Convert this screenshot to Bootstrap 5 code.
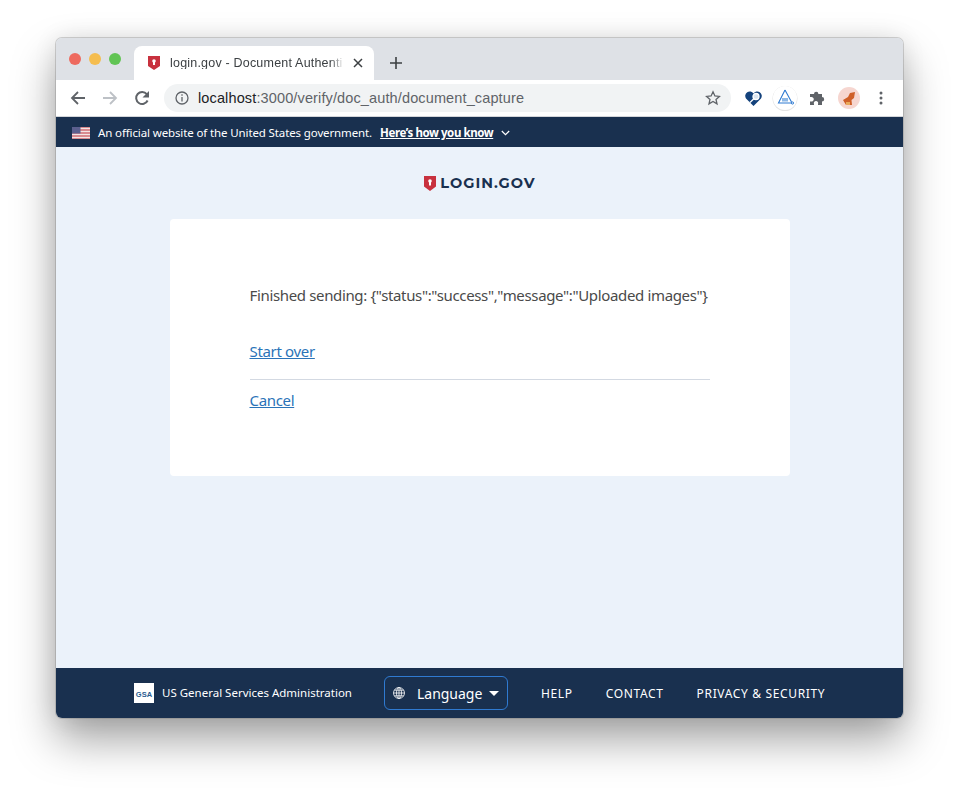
<!DOCTYPE html>
<html lang="en">
<head>
<meta charset="utf-8">
<title>login.gov - Document Authentication</title>
<link href="https://cdn.jsdelivr.net/npm/bootstrap@5.3.0/dist/css/bootstrap.min.css" rel="stylesheet">
<style>
html,body{height:792px;overflow:hidden;background:#fff}
body{padding:38px 56px 74px;font-family:"Noto Sans","Liberation Sans",sans-serif}
.win{height:680px;border-radius:6px;overflow:hidden;box-shadow:0 0 0 1px rgba(120,120,120,.32),0 22px 44px rgba(0,0,0,.36),0 0 24px rgba(0,0,0,.09);background:#ebf2fa}
.tabbar{height:42px;background:#dee1e6;padding-left:13px}
.dot{width:12px;height:12px;border-radius:50%;margin-right:8px;margin-top:15px}
.tab{width:240px;height:34px;margin-left:5px;margin-top:8px;background:#fff;border-radius:8px 8px 0 0;padding:0 11px 0 14px;font:12.5px/1 "Liberation Sans",sans-serif;color:#3c4043}
.tabt{width:174px;margin-left:10px;white-space:nowrap;overflow:hidden;letter-spacing:.2px;-webkit-mask-image:linear-gradient(90deg,#000 92%,transparent)}
.plus{margin-left:16px;margin-top:19px}
.toolbar{height:37px;background:#fff;padding:0 0 0 14px;border-bottom:1px solid #d4d6da}
.omni{width:567px;height:28px;background:#f1f3f4;border-radius:14px;margin-left:14px;padding:0 10px 0 11px;font:14.5px/1 "Liberation Sans",sans-serif;color:#5f6368}
.omni b{font-weight:400;color:#202124}
.omnit{margin-left:9px;flex:1;letter-spacing:.13px}
.exts{margin-left:6px;width:160px}
.ext{width:32px;height:28px;flex:none}
.gov{height:30px;background:#19304f;color:#fff;padding:1px 0 0 16px;font-size:11.5px}
.gov span{letter-spacing:-.12px}
.gov a{color:#fff;font-weight:700;margin-left:8px;letter-spacing:-.42px}
.main{height:521px;padding-top:28px}
.logo{height:16px;margin-bottom:28px;padding-left:1px;color:#19304f;font:700 14.5px/16px Montserrat,"Liberation Sans",sans-serif;letter-spacing:1.05px}
.panel{width:620px;height:257px;background:#fff;border-radius:4px;padding:64px 80px 0;margin:0 auto;font:15px/24px "Noto Sans",sans-serif;color:#4a4a4a}
.panel p{margin:0 0 32px;white-space:nowrap;letter-spacing:-.35px}
.panel a{color:#2a73b8;letter-spacing:-.33px}
.panel hr{margin:16px 0 8px;border-color:#d3d9e2;opacity:1}
.foot{height:50px;background:#19304f;color:#fff;font:11.5px/1 "Noto Sans",sans-serif;padding-left:78px}
.gsa{width:20px;height:20px;background:#fff;color:#2a5c91;font:700 7.5px/24px "Liberation Sans",sans-serif;text-align:center;margin-right:8px}
.lang{width:124px;height:34px;border:1px solid #2f7ad1;border-radius:6px;margin:0 33px 0 32px;padding:0 8px 0 8px;font-size:14px;letter-spacing:-.02px}
.lang svg{flex:none}
.lng{margin-left:12px;padding-top:1px}
.caret{width:0;height:0;border:5px solid transparent;border-top-color:#fff;border-bottom:0;margin-left:7px}
.flink{font-size:12px;letter-spacing:.65px;margin:1px 33px 0 0;color:#fff}
</style>
</head>
<body>
<div class="win d-flex flex-column">
  <div class="tabbar d-flex align-items-start">
    <div class="dot" style="background:#ee6a5f"></div><div class="dot" style="background:#f5bd4f"></div><div class="dot" style="background:#61c454"></div>
    <div class="tab d-flex align-items-center">
      <svg width="12" height="14" viewBox="0 0 12 14"><path d="M0 0H12V10L6 14L0 10Z" fill="#c8313e"/><circle cx="6" cy="5" r="1.8" fill="#fff"/><rect x="5" y="5" width="2" height="4" fill="#fff"/></svg>
      <div class="tabt">login.gov - Document Authenti</div>
      <svg class="ms-auto" width="10" height="10" viewBox="0 0 10 10"><path d="M1 1L9 9M9 1L1 9" stroke="#3c4043" stroke-width="1.5"/></svg>
    </div>
    <svg class="plus" width="12" height="12" viewBox="0 0 12 12"><path d="M6 0V12M0 6H12" stroke="#3c4043" stroke-width="1.6"/></svg>
  </div>
  <div class="toolbar d-flex align-items-center">
    <svg width="16" height="16" viewBox="0 0 16 16" fill="none" stroke="#5f6368" stroke-width="1.8"><path d="M15 8H2M8 2L2 8L8 14"/></svg>
    <svg class="ms-3" width="16" height="16" viewBox="0 0 16 16" fill="none" stroke="#bdc1c6" stroke-width="1.8"><path d="M1 8H14M8 2L14 8L8 14"/></svg>
    <svg class="ms-3" width="16" height="16" viewBox="0 0 16 16" fill="none" stroke="#5f6368" stroke-width="2"><path d="M13.6 10.500A6 6 0 1 1 12.800 4.200"/><path d="M15 1V7.500H8.500Z" fill="#5f6368" stroke="none"/></svg>
    <div class="omni d-flex align-items-center">
      <svg width="14" height="14" viewBox="0 0 14 14" fill="none" stroke="#5f6368" stroke-width="1.3"><circle cx="7" cy="7" r="6"/><path d="M7 6V10.500M7 3.300V4.800"/></svg>
      <div class="omnit"><b>localhost</b>:3000/verify/doc_auth/document_capture</div>
      <svg width="16" height="16" viewBox="0 0 16 16" fill="none" stroke="#5f6368" stroke-width="1.300"><path d="M8 1.800L9.900 6L14.400 6.400L11 9.400L12 13.900L8 11.500L4 13.900L5 9.400L1.600 6.400L6.100 6Z"/></svg>
    </div>
    <div class="exts d-flex align-items-center">
      <div class="ext d-flex align-items-center justify-content-center"><svg width="17" height="15" viewBox="0 0 17 15"><path d="M8.500 15L1 7.500A4.200 4.200 0 0 1 8.500 2.500A4.200 4.200 0 0 1 16 7.500Z" fill="#14427c"/><circle cx="11" cy="5.500" r="3" fill="#dce6f1" stroke="#fff" stroke-width="1.300"/><path d="M8.800 7.700L5 11.500" stroke="#fff" stroke-width="1.300"/></svg></div>
      <div class="ext d-flex align-items-center justify-content-center"><svg width="28" height="28" viewBox="0 0 28 28"><circle cx="14" cy="14.600" r="12.500" fill="#e4e4e4"/><circle cx="14" cy="14" r="12" fill="#fff"/><path d="M14 6L7.500 19H21M14 6L20.500 18" fill="none" stroke="#2f7ad1" stroke-width="1.100"/><rect x="11" y="14" width="6" height="3.500" fill="#8db8e6"/><circle cx="21.500" cy="19" r="1.100" fill="none" stroke="#2f7ad1"/></svg></div>
      <div class="ext d-flex align-items-center justify-content-center"><svg width="16" height="16" viewBox="0 0 16 16"><path d="M1 4H5A2.200 2.200 0 1 1 9.400 4H13V7A2.200 2.200 0 1 1 13 11.400V15H9V14A2.200 2.200 0 1 0 5 14V15H1V11.500H2A2.300 2.300 0 1 0 2 7H1Z" fill="#5f6368"/></svg></div>
      <div class="ext d-flex align-items-center justify-content-center"><svg width="22" height="22" viewBox="0 0 22 22"><circle cx="11" cy="11" r="11" fill="#f6d6d0"/><path d="M12 6L17 5L16 11L13.500 13L14 18L8 18L5 13L10 10Z" fill="#cf5f28"/><path d="M8 15H12V18H8Z" fill="#e9a95a"/></svg></div>
      <div class="ext d-flex align-items-center justify-content-center"><svg width="4" height="14" viewBox="0 0 4 14" fill="#5f6368"><circle cx="2" cy="2" r="1.500"/><circle cx="2" cy="7" r="1.500"/><circle cx="2" cy="12" r="1.500"/></svg></div>
    </div>
  </div>
  <div class="gov d-flex align-items-center">
    <svg class="me-2" width="18" height="12" viewBox="0 0 18 12"><rect width="18" height="12" fill="#d98a8f"/><path d="M0 1.500H18M0 4.500H18M0 7.500H18M0 10.500H18" stroke="#f3e4e4" stroke-width="1"/><rect width="8.500" height="6.500" fill="#5b5f8e"/></svg>
    <span>An official website of the United States government.</span>
    <a href="#">Here’s how you know</a>
    <svg class="ms-2" width="9" height="6" viewBox="0 0 9 6" fill="none" stroke="#fff" stroke-width="1.200"><path d="M.8 1L4.500 4.700L8.200 1"/></svg>
  </div>
  <div class="main">
    <div class="logo d-flex align-items-center justify-content-center">
      <svg class="me-1" width="12" height="15" viewBox="0 0 12 15"><path d="M0 0H12V10.500L6 15L0 10.500Z" fill="#c8313e"/><circle cx="6" cy="5" r="1.800" fill="#fff"/><rect x="5" y="5" width="2" height="4.500" fill="#fff"/></svg>
      <span>LOGIN.GOV</span>
    </div>
    <div class="panel">
      <p>Finished sending: {"status":"success","message":"Uploaded images"}</p>
      <a href="#">Start over</a>
      <hr>
      <a href="#">Cancel</a>
    </div>
  </div>
  <div class="foot d-flex align-items-center">
    <div class="gsa">GSA</div>
    <span>US General Services Administration</span>
    <div class="lang d-flex align-items-center">
      <svg width="12" height="12" viewBox="0 0 12 12" fill="none" stroke="#fff" stroke-width=".8"><circle cx="6" cy="6" r="5.500"/><ellipse cx="6" cy="6" rx="2.500" ry="5.500"/><path d="M.5 6H11.500M1.300 3.200H10.700M1.300 8.800H10.700M6 .5V11.500"/></svg>
      <span class="lng">Language</span>
      <div class="caret"></div>
    </div>
    <a class="flink text-decoration-none" href="#">HELP</a>
    <a class="flink text-decoration-none" href="#">CONTACT</a>
    <a class="flink text-decoration-none" href="#">PRIVACY &amp; SECURITY</a>
  </div>
</div>
</body>
</html>
